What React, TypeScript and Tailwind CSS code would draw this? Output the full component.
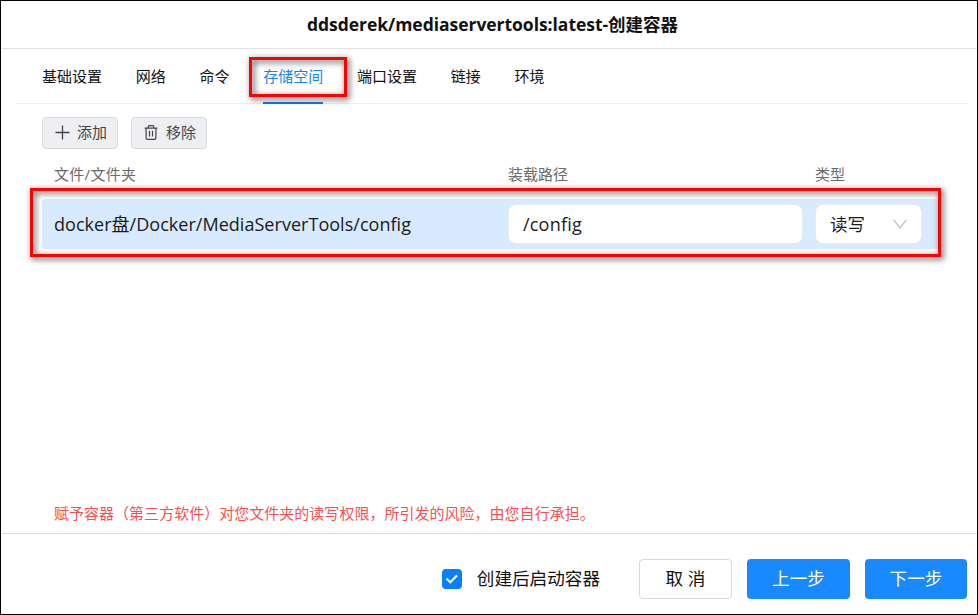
import React from "react";

const tabs = ["基础设置", "网络", "命令", "存储空间", "端口设置", "链接", "环境"];
const ACTIVE_TAB = "存储空间";

function Highlight({ className }: { className: string }) {
  return (
    <div
      className={`pointer-events-none absolute border-3 border-[#ff0000] drop-shadow-[2px_2px_3px_rgba(0,0,0,0.8)] ${className}`}
    />
  );
}

function Header() {
  return (
    <header className="flex h-12 items-center justify-center border-b border-[#e1e1e1] pl-[7px]">
      <h1 className="flex items-center whitespace-nowrap text-[17.5px] font-bold text-[#111]">
        <span className="tracking-[-0.04px]">ddsderek/mediaservertools:latest-</span>
        <span>创建容器</span>
      </h1>
    </header>
  );
}

function TabBar() {
  return (
    <nav className="mr-2.5 ml-4 flex h-[55px] gap-[33.75px] border-b border-[#eeeeee] pl-[25px] text-[15px] text-[#111]">
      {tabs.map((tab) =>
        tab === ACTIVE_TAB ? (
          <div key={tab} className="relative flex h-[55px] items-center border-b-2 border-[#0a7cf0] pt-0.5 text-[#1283ff]">
            {tab}
            <Highlight className="-left-3.5 top-2 h-10 w-[98px]" />
          </div>
        ) : (
          <div key={tab} className="flex h-[55px] items-center whitespace-nowrap">
            {tab}
          </div>
        )
      )}
    </nav>
  );
}

function Toolbar() {
  const button =
    "flex h-8 w-[76px] items-center justify-center rounded-[4px] border border-[#d8d9dc] bg-[#eeeff3] pl-0.5 text-[15px] text-[#444]";
  return (
    <div className="flex gap-[13px] pl-[41px] pt-[13px]">
      <button className={button}>
        <svg className="mr-[7px] mb-0.5 h-[15px] w-[15px]" viewBox="0 0 15 15" fill="none" stroke="#444" strokeWidth="1.3">
          <path d="M7.5 .5v14M.5 7.5h14" />
        </svg>
        <span className="pb-0.5">添加</span>
      </button>
      <button className={button}>
        <svg className="mr-2 mb-0.5 h-[15px] w-[14px]" viewBox="0 0 14 15" fill="none" stroke="#444" strokeWidth="1.2">
          <path d="M.6 3.2h12.8M4.3 3V1.6c0-.6.3-.9.9-.9h3.6c.6 0 .9.3.9.9V3M2.1 3.3v9.6c0 .9.5 1.4 1.4 1.4h7c.9 0 1.4-.5 1.4-1.4V3.3M5.5 5.8v5.7M8.5 5.8v5.7" />
        </svg>
        <span className="pb-0.5">移除</span>
      </button>
    </div>
  );
}

function VolumeTable() {
  return (
    <section className="pl-[41px]">
      <div className="mt-[14px] flex h-[22px] items-center pl-3 text-[15px] text-[#6b6b6b]">
        <span className="w-[454px] tracking-[0.3px]">文件/文件夹</span>
        <span className="w-[307px]">装载路径</span>
        <span>类型</span>
      </div>
      <div className="relative mt-3.5 flex h-[50px] w-[898px] items-center rounded-[4px] bg-[#d8eaff] pl-3 text-[17.5px] text-[#1a1a1a]">
        <span className="w-[454px] whitespace-nowrap text-[18px] tracking-[0.03px]">
          docker盘/Docker/MediaServerTools/config
        </span>
        <div className="flex h-10 w-[295px] items-center rounded-[8px] border border-[#e6ebf2] bg-white pl-3.5 text-[18px] tracking-[0.2px]">
          /config
        </div>
        <div className="ml-3 flex h-10 w-[107px] items-center justify-between rounded-[8px] border border-[#e6ebf2] bg-white pl-3.5 pr-[14px]">
          读写
          <svg className="h-3 w-[14px]" viewBox="0 0 14 12" fill="none" stroke="#bfbfbf" strokeWidth="1.3">
            <path d="M.8 1.8 7 10l6.2-8.2" />
          </svg>
        </div>
        <Highlight className="-left-3 -top-[11px] h-[69px] w-[911px]" />
      </div>
    </section>
  );
}

function Footer() {
  return (
    <footer className="flex h-[81px] items-start justify-end border-t border-[#dcdcdc] pr-2.5 pt-[25px] text-[17.6px] text-[#111]">
      <label className="mr-[39px] flex h-10 items-center gap-[15px]">
        <span className="flex h-5 w-5 items-center justify-center rounded-[4px] bg-[#087fff]">
          <svg className="h-3 w-[14px]" viewBox="0 0 14 12" fill="none" stroke="white" strokeWidth="2">
            <path d="m1.5 5.5 3.8 3.8 6.9-7" />
          </svg>
        </span>
        <span className="whitespace-nowrap pb-0.5">创建后启动容器</span>
      </label>
      <button className="mr-[15px] h-10 w-[93px] rounded-[4px] border border-[#d9d9d9] bg-white pb-0.5">取 消</button>
      <button className="mr-[15px] h-10 w-[103px] rounded-[4px] bg-[#1989ff] pb-0.5 text-white">上一步</button>
      <button className="h-10 w-[102px] rounded-[4px] bg-[#1989ff] pb-0.5 text-white">下一步</button>
    </footer>
  );
}

export default function App() {
  return (
    <main className="flex h-[615px] w-[978px] flex-col overflow-hidden border border-black bg-white font-['Open_Sans','Noto_Sans_CJK_SC',sans-serif]">
      <Header />
      <TabBar />
      <Toolbar />
      <VolumeTable />
      <p className="mt-auto mb-2 pl-[53px] text-[15px] leading-[23px] tracking-[0.02px] text-[#ff4d4f]">
        赋予容器（第三方软件）对您文件夹的读写权限，所引发的风险，由您自行承担。
      </p>
      <Footer />
    </main>
  );
}
